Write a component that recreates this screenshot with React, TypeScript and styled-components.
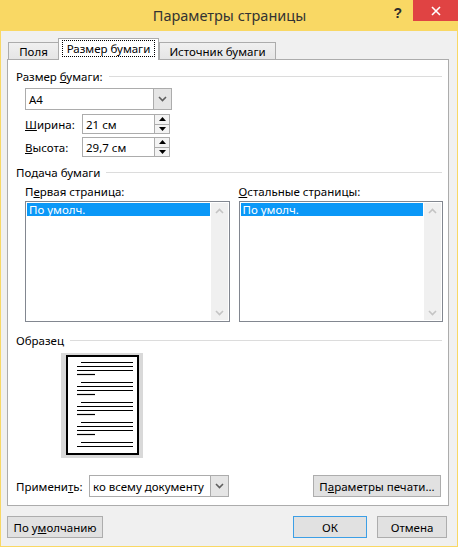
import styled, { createGlobalStyle } from "styled-components";

const GlobalStyle = createGlobalStyle`
  html, body {
    margin: 0;
    padding: 0;
  }
  body {
    font-family: "Segoe UI", "Noto Sans", "Open Sans", sans-serif;
    font-size: 11.5px;
    color: #000;
  }
  * {
    box-sizing: border-box;
  }
`;

const Window = styled.div`
  width: 458px;
  height: 547px;
  display: flex;
  flex-direction: column;
  background: #f9d864;
  padding: 0 1px 1px 1px;
`;

const TitleBar = styled.div`
  height: 31px;
  flex: none;
  display: grid;
  grid-template-columns: 1fr auto 1fr;
  align-items: center;
  margin-right: -1px;
`;

const Title = styled.div`
  grid-column: 2;
  font-size: 14.5px;
  color: #333;
  padding-bottom: 1px;
`;

const Caption = styled.div`
  grid-column: 3;
  justify-self: end;
  align-self: start;
  display: flex;
  align-items: flex-start;
`;

const HelpGlyph = styled.span`
  font-family: "Liberation Sans", sans-serif;
  font-weight: bold;
  font-size: 14px;
  color: #2b2b2b;
  margin-top: 5px;
  margin-right: 11px;
`;

const CloseButton = styled.div`
  width: 45px;
  height: 21px;
  background: #e04343;
  display: flex;
  align-items: center;
  justify-content: center;
`;

const Client = styled.div`
  flex: 1;
  background: #f0f0f0;
  display: flex;
  flex-direction: column;
  padding: 7px 8px 0 6px;
`;

const TabRow = styled.div`
  display: flex;
  align-items: flex-end;
  height: 22px;
  padding-left: 1px;
`;

const Tab = styled.div<{ $active?: boolean; $w: number }>`
  position: relative;
  z-index: ${(p) => (p.$active ? 2 : 0)};
  width: ${(p) => p.$w}px;
  height: ${(p) => (p.$active ? 22 : 18)}px;
  border: 1px solid #acacac;
  border-bottom: none;
  background: ${(p) => (p.$active ? "#fff" : "linear-gradient(#f0f0f0, #e5e5e5)")};
  display: flex;
  align-items: center;
  justify-content: center;
  white-space: nowrap;
  padding-bottom: ${(p) => (p.$active ? 2 : 0)}px;
  margin-left: ${(p) => (p.$active ? -1 : 0)}px;
`;

const FocusText = styled.span`
  outline: 1px dotted #000;
  padding: 0 4px;
  line-height: 15px;
`;

const Panel = styled.div`
  position: relative;
  z-index: 1;
  margin-top: -1px;
  background: #fff;
  border: 1px solid #acacac;
  padding: 8px 6px 8px 8px;
  display: flex;
  flex-direction: column;
`;

const Heading = styled.div<{ $mt?: number }>`
  display: flex;
  align-items: center;
  gap: 6px;
  height: 16px;
  margin-top: ${(p) => p.$mt ?? 0}px;
  white-space: nowrap;
  &::after {
    content: "";
    flex: 1;
    border-top: 1px solid #dcdcdc;
  }
`;

const Indent = styled.div`
  margin-left: 9px;
  display: flex;
  flex-direction: column;
`;

const Combo = styled.div<{ $w: number; $mt?: number }>`
  width: ${(p) => p.$w}px;
  height: 22px;
  margin-top: ${(p) => p.$mt ?? 0}px;
  border: 1px solid #acacac;
  background: #fff;
  display: flex;
  align-items: stretch;
  flex: none;
`;

const ComboText = styled.div`
  flex: 1;
  display: flex;
  align-items: center;
  padding-left: 3px;
  white-space: nowrap;
  overflow: hidden;
`;

const DropButton = styled.div`
  width: 18px;
  flex: none;
  background: #e5e5e5;
  border-left: 1px solid #acacac;
  display: flex;
  align-items: center;
  justify-content: center;
`;

const FieldRow = styled.div<{ $mt: number }>`
  display: flex;
  align-items: center;
  margin-top: ${(p) => p.$mt}px;
`;

const FieldLabel = styled.div<{ $w: number }>`
  width: ${(p) => p.$w}px;
  flex: none;
  white-space: nowrap;
`;

const Spin = styled.div`
  width: 88px;
  height: 20px;
  border: 1px solid #acacac;
  background: #fff;
  display: flex;
`;

const SpinText = styled.div`
  flex: 1;
  display: flex;
  align-items: center;
  padding-left: 3px;
`;

const SpinButtons = styled.div`
  width: 15px;
  display: flex;
  flex-direction: column;
  border-left: 1px solid #acacac;
  background: #f3f3f3;
`;

const SpinHalf = styled.div<{ $top?: boolean }>`
  flex: 1;
  display: flex;
  align-items: center;
  justify-content: center;
  border-bottom: ${(p) => (p.$top ? "1px solid #acacac" : "none")};
`;

const Columns = styled.div`
  display: flex;
  gap: 9px;
  margin-top: 4px;
  margin-right: -1px;
`;

const Column = styled.div`
  flex: 1;
  display: flex;
  flex-direction: column;
`;

const ColLabel = styled.div`
  height: 16px;
  line-height: 16px;
`;

const ListBox = styled.div`
  margin-top: 1px;
  height: 121px;
  border: 1px solid #828790;
  background: #fff;
  padding: 1px;
  display: flex;
`;

const ListItems = styled.div`
  flex: 1;
`;

const ListItem = styled.div<{ $selected?: boolean }>`
  height: 13px;
  line-height: 13px;
  padding-left: 2px;
  margin-right: 1px;
  background: ${(p) => (p.$selected ? "#0b98f7" : "transparent")};
  color: ${(p) => (p.$selected ? "#fff" : "#000")};
`;

const ScrollBar = styled.div`
  width: 17px;
  background: #f0f0f0;
  display: flex;
  flex-direction: column;
  justify-content: space-between;
  align-items: center;
  padding: 5px 0 4px;
`;

const Sample = styled.div`
  margin: 5px 0 0 45px;
  width: 82px;
  height: 105px;
`;

const ApplyRow = styled.div`
  display: flex;
  align-items: center;
  margin-top: 17px;
`;

const Button = styled.div<{ $w: number; $default?: boolean }>`
  width: ${(p) => p.$w}px;
  height: 22px;
  flex: none;
  background: #e1e1e1;
  border: 1px solid ${(p) => (p.$default ? "#3c9fe6" : "#adadad")};
  box-shadow: ${(p) => (p.$default ? "inset 0 0 0 1px #e1e1e1" : "none")};
  display: flex;
  align-items: center;
  justify-content: center;
  white-space: nowrap;
`;

const PushRight = styled.div`
  margin-left: auto;
  margin-right: 1px;
`;

const Footer = styled.div`
  display: flex;
  margin-top: 10px;
  padding-right: 2px;
`;

const FooterRight = styled.div`
  margin-left: auto;
  display: flex;
  gap: 10px;
`;

function Chevron({ up, color = "#5f5f5f" }: { up?: boolean; color?: string }) {
  return (
    <svg width="9" height="6" viewBox="0 0 9 6">
      <path
        d={up ? "M1 5 L4.5 1.5 L8 5" : "M1 1 L4.5 4.5 L8 1"}
        fill="none"
        stroke={color}
        strokeWidth="1.6"
      />
    </svg>
  );
}

function Triangle({ up }: { up?: boolean }) {
  return (
    <svg width="7" height="4" viewBox="0 0 7 4">
      <path d={up ? "M0 4 L3.5 0 L7 4 Z" : "M0 0 L3.5 4 L7 0 Z"} fill="#000" />
    </svg>
  );
}

function PagePreview() {
  const groups = [9, 29, 49, 69, 89];
  return (
    <svg width="82" height="105" viewBox="0 0 82 105">
      <rect x="0" y="0" width="82" height="105" fill="#d9d9d9" />
      <rect x="6" y="3" width="71" height="98" fill="#fff" stroke="#000" strokeWidth="2" />
      {groups.map((g, i) => (
        <g key={g} stroke="#000" strokeWidth="1.2">
          <line x1="20" y1={g + 0.5} x2="72" y2={g + 0.5} />
          <line x1="16" y1={g + 4.5} x2="72" y2={g + 4.5} />
          {i < groups.length - 1 && (
            <>
              <line x1="16" y1={g + 8.5} x2="72" y2={g + 8.5} />
              <line x1="16" y1={g + 12.5} x2="34" y2={g + 12.5} />
            </>
          )}
        </g>
      ))}
    </svg>
  );
}

function List() {
  return (
    <ListBox>
      <ListItems>
        <ListItem $selected>По умолч.</ListItem>
      </ListItems>
      <ScrollBar>
        <Chevron up color="#c4c4c4" />
        <Chevron color="#c4c4c4" />
      </ScrollBar>
    </ListBox>
  );
}

export default function App() {
  return (
    <>
      <GlobalStyle />
      <Window>
        <TitleBar>
          <Title>Параметры страницы</Title>
          <Caption>
            <HelpGlyph>?</HelpGlyph>
            <CloseButton>
              <svg width="10" height="10" viewBox="0 0 10 10">
                <path d="M1 1 L9 9 M9 1 L1 9" stroke="#fff" strokeWidth="1.6" />
              </svg>
            </CloseButton>
          </Caption>
        </TitleBar>
        <Client>
          <TabRow>
            <Tab $w={51}>Поля</Tab>
            <Tab $w={101} $active>
              <FocusText>Размер бумаги</FocusText>
            </Tab>
            <Tab $w={117}>Источник бумаги</Tab>
          </TabRow>
          <Panel>
            <Heading>
              <span>
                Размер <u>б</u>умаги:
              </span>
            </Heading>
            <Indent>
              <Combo $w={147} $mt={4}>
                <ComboText>A4</ComboText>
                <DropButton>
                  <Chevron />
                </DropButton>
              </Combo>
              <FieldRow $mt={4}>
                <FieldLabel $w={57}>
                  <u>Ш</u>ирина:
                </FieldLabel>
                <Spin>
                  <SpinText>21 см</SpinText>
                  <SpinButtons>
                    <SpinHalf $top>
                      <Triangle up />
                    </SpinHalf>
                    <SpinHalf>
                      <Triangle />
                    </SpinHalf>
                  </SpinButtons>
                </Spin>
              </FieldRow>
              <FieldRow $mt={3}>
                <FieldLabel $w={57}>
                  <u>В</u>ысота:
                </FieldLabel>
                <Spin>
                  <SpinText>29,7 см</SpinText>
                  <SpinButtons>
                    <SpinHalf $top>
                      <Triangle up />
                    </SpinHalf>
                    <SpinHalf>
                      <Triangle />
                    </SpinHalf>
                  </SpinButtons>
                </Spin>
              </FieldRow>
            </Indent>

            <Heading $mt={7}>
              <span>Подача бумаги</span>
            </Heading>
            <Indent>
              <Columns>
                <Column>
                  <ColLabel>
                    П<u>е</u>рвая страница:
                  </ColLabel>
                  <List />
                </Column>
                <Column>
                  <ColLabel>
                    <u>О</u>стальные страницы:
                  </ColLabel>
                  <List />
                </Column>
              </Columns>
            </Indent>

            <Heading $mt={10}>
              <span>Образец</span>
            </Heading>
            <Sample>
              <PagePreview />
            </Sample>

            <ApplyRow>
              <FieldLabel $w={73}>
                Примени<u>т</u>ь:
              </FieldLabel>
              <Combo $w={140}>
                <ComboText>ко всему документу</ComboText>
                <DropButton>
                  <Chevron />
                </DropButton>
              </Combo>
              <PushRight>
                <Button $w={128}>
                  П<u>а</u>раметры печати...
                </Button>
              </PushRight>
            </ApplyRow>
          </Panel>
          <Footer>
            <Button $w={96}>
              По у<u>м</u>олчанию
            </Button>
            <FooterRight>
              <Button $w={74} $default>
                ОК
              </Button>
              <Button $w={70}>Отмена</Button>
            </FooterRight>
          </Footer>
        </Client>
      </Window>
    </>
  );
}
